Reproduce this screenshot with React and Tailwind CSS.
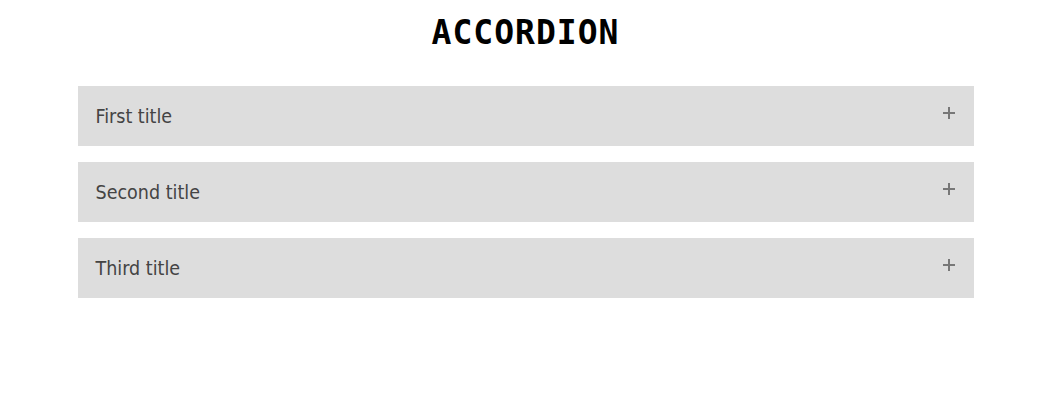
import React from "react";

function Plus() {
  return (
    <svg width="12" height="12" viewBox="0 0 12 12" className="mb-[6px] shrink-0">
      <rect x="5" y="0" width="2" height="12" fill="#777777" />
      <rect x="0" y="5" width="12" height="2" fill="#777777" />
    </svg>
  );
}

export default function App() {
  const items = ["First title", "Second title", "Third title"];
  return (
    <div className="w-[1041px] h-[408px] bg-white pl-[10px]">
      <div className="w-[896px] mx-auto pt-[14px]">
        <h1
          className="text-center text-[33px] leading-[38px] font-bold tracking-[1px] text-black"
          style={{ fontFamily: '"DejaVu Sans Mono", monospace' }}
        >
          ACCORDION
        </h1>
        <div className="mt-[34px] flex flex-col gap-[16px]">
          {items.map((t) => (
            <div
              key={t}
              className="h-[60px] bg-[#dddddd] flex items-center justify-between pl-[18px] pr-[19px]"
            >
              <span
                className="text-[19.5px] text-[#444444] font-stretch-condensed mt-[2px]"
                style={{ fontFamily: '"DejaVu Sans Condensed", "DejaVu Sans", sans-serif' }}
              >
                {t}
              </span>
              <Plus />
            </div>
          ))}
        </div>
      </div>
    </div>
  );
}
